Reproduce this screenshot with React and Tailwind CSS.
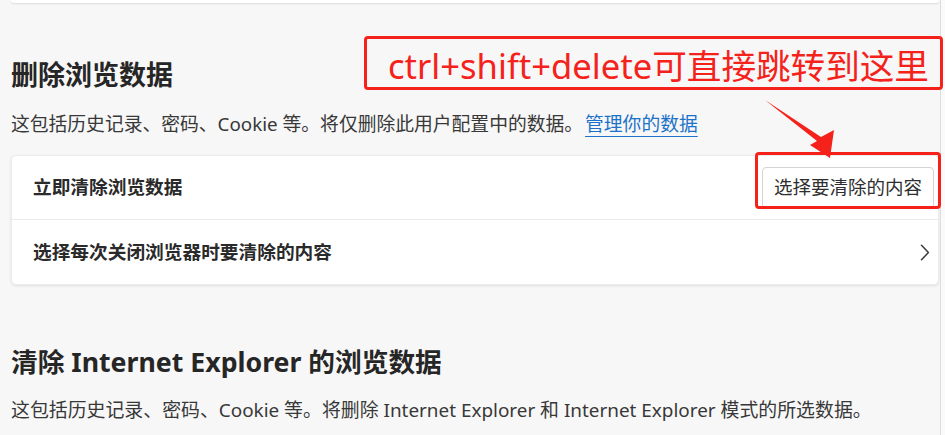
const font = { fontFamily: '"Noto Sans", "Noto Sans CJK SC", sans-serif' }

function Row({ children, right, last }) {
  return (
    <div className={"flex items-center justify-between h-[64px] pl-[21px] pr-[4px] " + (last ? "" : "border-b border-[#ebebeb]")}>
      <span className="text-[18.7px] font-semibold text-[#2a2a2a] leading-none">{children}</span>
      {right}
    </div>
  )
}

function Chevron() {
  return (
    <svg width="10" height="17" viewBox="0 0 10 17" className="mr-[4px]">
      <path d="M1.5 1.2 L8.4 8.5 L1.5 15.8" fill="none" stroke="#3a3a3a" strokeWidth="1.5" strokeLinecap="round" strokeLinejoin="round" />
    </svg>
  )
}

export default function App() {
  return (
    <div className="relative w-[945px] h-[435px] overflow-hidden bg-[#f7f7f7]" style={font}>
      <div className="flex h-full">
        <main className="w-[940px] h-full pl-[11px] pr-[1px]">
          <div className="h-[3px] bg-white shadow-[0_1px_2px_rgba(0,0,0,0.12)] rounded-b" />

          <h1 className="mt-[54px] text-[27px] leading-[36px] font-bold text-[#262626]">删除浏览数据</h1>
          <p className="mt-[17px] text-[18.8px] leading-[28px] text-[#383838] whitespace-nowrap">
            这包括历史记录、密码、Cookie 等。将仅删除此用户配置中的数据。
            <a className="text-[#1b73c9] underline decoration-1 underline-offset-[5px] ml-[2px]">管理你的数据</a>
          </p>

          <section className="mt-[17px] bg-white rounded-[5px] border border-[#ececec] shadow-[0_1px_3px_rgba(0,0,0,0.10)]">
            <Row
              right={
                <button className="h-[42px] px-[11px] bg-white border border-[#d4d4d4] rounded-[4px] text-[18.5px] text-[#2e2e2e] leading-none">
                  选择要清除的内容
                </button>
              }
            >
              立即清除浏览数据
            </Row>
            <Row last right={<Chevron />}>
              选择每次关闭浏览器时要清除的内容
            </Row>
          </section>

          <h2 className="mt-[59px] text-[26.7px] leading-[36px] font-bold text-[#262626] whitespace-nowrap">
            清除 Internet Explorer 的浏览数据
          </h2>
          <p className="mt-[16px] text-[18.9px] leading-[28px] text-[#383838] whitespace-nowrap">
            这包括历史记录、密码、Cookie 等。将删除 Internet Explorer 和 Internet Explorer 模式的所选数据。
          </p>
        </main>
        <div className="w-[1px] h-full bg-[#dedede]" />
        <div className="flex-1 h-full bg-[#fafafa]" />
      </div>

      {/* annotation */}
      <div className="absolute left-[364px] top-[36px] w-[579px] h-[54px] border-[3px] border-[#f5221b] rounded-[4px] flex items-center pl-[21px] pt-[6px]">
        <span className="text-[34.6px] leading-none text-[#f5221b] whitespace-nowrap">ctrl+shift+delete可直接跳转到这里</span>
      </div>
      <div className="absolute left-[755px] top-[152px] w-[186px] h-[57px] border-[3px] border-[#f5221b] rounded-[4px]" />
      <svg className="absolute inset-0 pointer-events-none" width="945" height="435">
        <polygon points="765,100 821,137 834,130 830,158 810,145 817,141" fill="#f5221b" />
      </svg>
    </div>
  )
}
